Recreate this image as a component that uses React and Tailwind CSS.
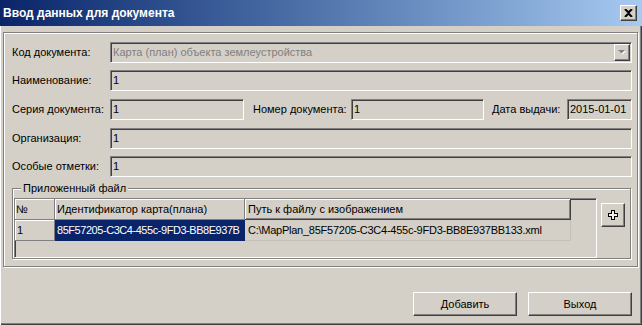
import React from "react";

const sunken =
  "border border-[#808080] border-r-white border-b-white shadow-[inset_1px_1px_0_#404040]";
const raised =
  "border border-white border-r-[#404040] border-b-[#404040] shadow-[inset_-1px_-1px_0_#808080]";
const etched = "border border-[#808080] shadow-[inset_1px_1px_0_#fff,1px_1px_0_#fff]";

function Field({ width, value }) {
  return (
    <div className={`${sunken} h-[21px] ${width} flex items-center pl-[2px]`}>
      {value}
    </div>
  );
}

function Label({ width, children, className = "" }) {
  return <div className={`${width} shrink-0 ${className}`}>{children}</div>;
}

export default function App() {
  return (
    <div className="w-[642px] h-[325px] bg-[#d4d0c8] flex flex-col font-['Liberation_Sans',sans-serif] text-[11px] text-black overflow-hidden shadow-[inset_1px_0_0_#fff,inset_-1px_-1px_0_#404040,inset_-2px_-2px_0_#808080]">
      {/* title bar */}
      <div className="h-[26px] shrink-0 flex items-center justify-between pl-[3px] pr-[5px] bg-linear-to-r from-[#0a246a] to-[#a6caf0]">
        <span className="text-white font-bold text-[12px]">Ввод данных для документа</span>
        <div className={`${raised} bg-[#d4d0c8] w-[17px] h-[16px] flex items-center justify-center`}>
          <svg width="9" height="8" viewBox="0 0 9 8">
            <path d="M1 0 L4.5 3.5 L8 0 M1 8 L4.5 4.5 L8 8" stroke="#000" strokeWidth="2" fill="none" />
          </svg>
        </div>
      </div>

      {/* main panel */}
      <div className={`${etched} mt-[6px] ml-[3px] mr-[4px] h-[235px] shrink-0 pt-[9px] pl-[8px] flex flex-col`}>
        <div className="flex items-center h-[21px]">
          <Label width="w-[98px]">Код документа:</Label>
          <div className={`${sunken} h-[21px] w-[522px] flex items-center pl-[2px] text-[#808080]`}>
            <span className="flex-1">Карта (план) объекта землеустройства</span>
            <div className={`${raised} bg-[#d4d0c8] w-[16px] h-[17px] mr-[1px] flex items-center justify-center`}>
              <svg width="8" height="5" viewBox="0 0 8 5">
                <path d="M1 1 H8 L4.5 4.5 Z" fill="#fff" />
                <path d="M0 0 H7 L3.5 3.5 Z" fill="#808080" />
              </svg>
            </div>
          </div>
        </div>

        <div className="flex items-center mt-[7px]">
          <Label width="w-[98px]">Наименование:</Label>
          <Field width="w-[522px]" value="1" />
        </div>

        <div className="flex items-center mt-[8px]">
          <Label width="w-[98px]">Серия документа:</Label>
          <Field width="w-[134px]" value="1" />
          <Label width="w-[98px]" className="ml-[9px]">Номер документа:</Label>
          <Field width="w-[133px]" value="1" />
          <Label width="w-[75px]" className="ml-[8px]">Дата выдачи:</Label>
          <Field width="w-[65px]" value="2015-01-01" />
        </div>

        <div className="flex items-center mt-[8px]">
          <Label width="w-[98px]">Организация:</Label>
          <Field width="w-[522px]" value="1" />
        </div>

        <div className="flex items-center mt-[7px]">
          <Label width="w-[98px]">Особые отметки:</Label>
          <Field width="w-[522px]" value="1" />
        </div>

        {/* attached file group */}
        <fieldset className={`${etched} mt-[5px] w-[619px] pl-[1px]`}>
          <legend className="ml-[7px] px-[2px] leading-[13px] bg-[#d4d0c8]">Приложенный файл</legend>
          <div className="flex mt-[3px]">
            <div className={`${sunken} w-[583px] h-[60px] flex flex-col`}>
              <div className="flex h-[21px]">
                <div className="w-[40px] border-r border-b border-[#808080] shadow-[inset_1px_1px_0_#fff] flex items-center pl-[1px]">
                  №
                </div>
                <div className="w-[190px] border-r border-b border-[#808080] shadow-[inset_1px_1px_0_#fff] flex items-center pl-[2px]">
                  Идентификатор карта(плана)
                </div>
                <div className="w-[326px] border-r border-b border-[#404040] shadow-[inset_1px_1px_0_#fff,inset_-1px_-1px_0_#808080] flex items-center pl-[3px]">
                  Путь к файлу с изображением
                </div>
              </div>
              <div className="flex h-[21px] tracking-[-0.25px]">
                <div className="w-[40px] border-r border-b border-[#808080] shadow-[inset_1px_1px_0_#fff] flex items-center pl-[2px]">
                  1
                </div>
                <div className="w-[190px] min-w-0 bg-[#0a246a] text-white flex items-center pl-[2px] overflow-hidden">
                  <span className="block w-[187px] overflow-hidden whitespace-nowrap tracking-[-0.45px]">
                    85F57205-C3C4-455c-9FD3-BB8E937B
                  </span>
                </div>
                <div className="w-[326px] border-r border-b border-[#c4c0b8] flex items-center pl-[3px] whitespace-nowrap">
                  C:\MapPlan_85F57205-C3C4-455c-9FD3-BB8E937BB133.xml
                </div>
              </div>
            </div>
            <div className={`${raised} bg-[#d4d0c8] ml-[4px] mt-[5px] w-[24px] h-[24px] flex items-center justify-center`}>
              <svg width="10" height="10" viewBox="0 0 10 10" shapeRendering="crispEdges">
                <path
                  d="M3.5 0.5 H6.5 V3.5 H9.5 V6.5 H6.5 V9.5 H3.5 V6.5 H0.5 V3.5 H3.5 Z"
                  fill="#f0efea"
                  stroke="#000"
                  strokeWidth="1"
                />
              </svg>
            </div>
          </div>
        </fieldset>
      </div>

      {/* buttons */}
      <div className="flex justify-end gap-[11px] pr-[10px] mt-[25px]">
        <button className={`${raised} bg-[#d4d0c8] w-[104px] h-[24px] text-[11px]`}>Добавить</button>
        <button className={`${raised} bg-[#d4d0c8] w-[104px] h-[24px] text-[11px]`}>Выход</button>
      </div>
    </div>
  );
}
